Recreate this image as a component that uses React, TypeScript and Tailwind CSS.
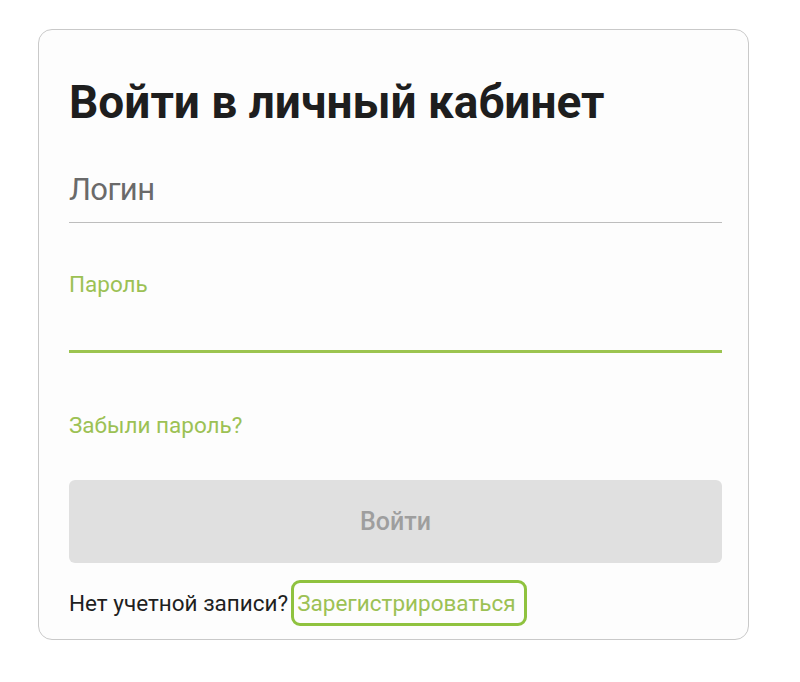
import React from "react";

export default function App() {
  return (
    <div className="w-[800px] h-[682px] bg-white" style={{ fontFamily: "Roboto, 'Noto Sans', sans-serif" }}>
      <div className="pt-[29px] pl-[38px]">
        <div className="w-[711px] h-[611px] rounded-[14px] border border-[#c9c9c9] bg-[#fdfdfd] pl-[30px] pt-[46px]">
          <div className="w-[653px] flex flex-col">
            <h1 className="text-[46px] leading-[52px] font-bold text-[#1e1e1e] whitespace-nowrap">Войти в личный кабинет</h1>
            <div className="mt-[42px] pb-[12px] border-b border-[#bdbdbd]">
              <div className="text-[31px] leading-[40px] tracking-[-0.6px] text-[#6a6a6a]">Логин</div>
            </div>
            <div className="mt-[47px] border-b-[3px] border-[#9cc450]">
              <div className="text-[22.5px] leading-[28px] text-[#9cc154]">Пароль</div>
              <div className="h-[52px]" />
            </div>
            <div className="mt-[58px] text-[22.5px] leading-[28px] text-[#9cc154]">Забыли пароль?</div>
            <button className="mt-[41px] h-[83px] w-full rounded-[6px] bg-[#e0e0e0] text-[25px] font-medium text-[#9e9e9e]">Войти</button>
            <div className="mt-[17px] flex items-center">
              <span className="text-[22.5px] leading-[28px] text-[#1f1f1f]">Нет учетной записи?</span>
              <span className="ml-[3px] h-[46px] flex items-center rounded-[9px] border-[3px] border-[#8fc23f] pl-[3px] pr-[8px] text-[22.5px] leading-[28px] text-[#9cc154]">Зарегистрироваться</span>
            </div>
          </div>
        </div>
      </div>
    </div>
  );
}
